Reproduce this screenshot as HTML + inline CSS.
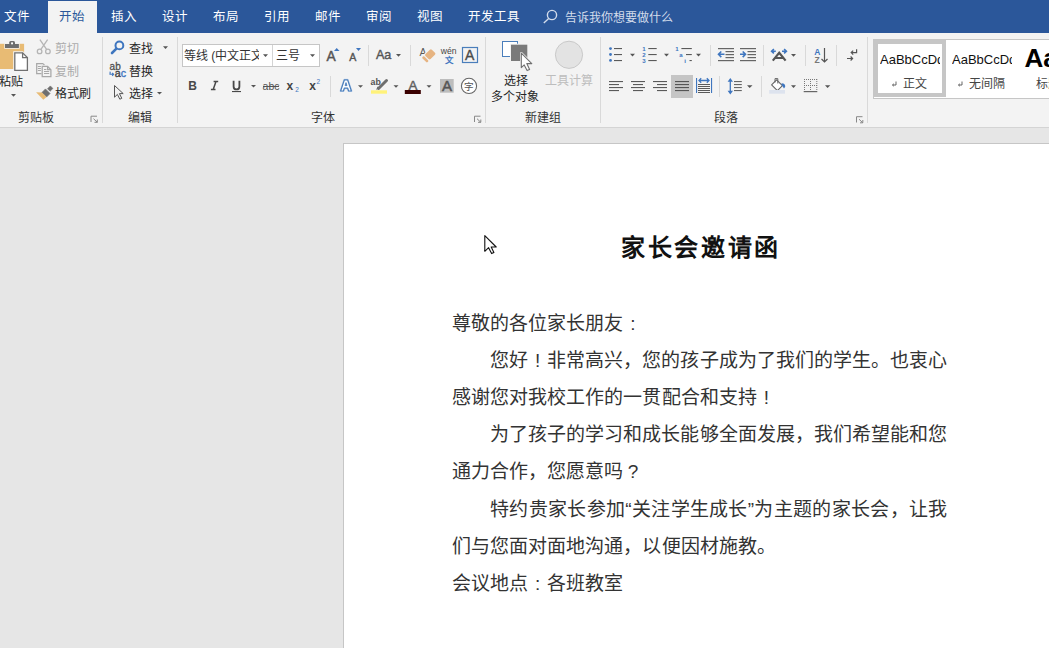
<!DOCTYPE html>
<html lang="zh-CN"><head><meta charset="utf-8">
<style>
*{margin:0;padding:0;box-sizing:border-box}
html,body{width:1049px;height:648px;overflow:hidden;background:#e6e6e6;font-family:"Liberation Sans",sans-serif;}
#tabbar{position:absolute;left:0;top:0;width:1049px;height:33px;background:#2b579a}
.tab{position:absolute;top:9px;color:#fff;font-size:12.5px;line-height:16px;white-space:nowrap}
#active{position:absolute;left:48px;top:1px;width:49px;height:33px;background:#f3f3f3}
#ribbon{position:absolute;left:0;top:33px;width:1049px;height:95px;background:#f3f3f3;border-bottom:1px solid #d4d4d4}
.t{position:absolute;font-size:12px;line-height:14px;color:#262626;white-space:nowrap}
.g{color:#ababab}
.lbl{position:absolute;top:110.5px;font-size:12px;line-height:14px;color:#333;white-space:nowrap}
#page{position:absolute;left:343px;top:143px;width:720px;height:520px;background:#fff;border-left:1px solid #c6c6c6;border-top:1px solid #c6c6c6}
.p{position:absolute;font-size:19px;line-height:20px;color:#333;white-space:nowrap;font-weight:300;letter-spacing:0.05px}
svg{position:absolute;left:0;top:0}
.q{display:inline-block;width:19px;overflow:visible}
.c{display:inline-block;width:19px;text-align:center;font-weight:normal}
</style></head><body>
<div id="tabbar"></div>
<div id="ribbon"></div>
<div id="active"></div>
<div class="tab" style="left:4px">文件</div>
<div class="tab" style="left:59px;color:#2b579a">开始</div>
<div class="tab" style="left:111px">插入</div>
<div class="tab" style="left:162px">设计</div>
<div class="tab" style="left:213px">布局</div>
<div class="tab" style="left:264px">引用</div>
<div class="tab" style="left:315px">邮件</div>
<div class="tab" style="left:366px">审阅</div>
<div class="tab" style="left:417px">视图</div>
<div class="tab" style="left:468px">开发工具</div>
<div class="tab" style="left:565px;top:9.5px;font-size:12px;color:#d3dceb">告诉我你想要做什么</div>

<div class="lbl" style="left:18px">剪贴板</div>
<div class="lbl" style="left:128px">编辑</div>
<div class="lbl" style="left:311px">字体</div>
<div class="lbl" style="left:525px">新建组</div>
<div class="lbl" style="left:714px">段落</div>

<div class="t" style="left:-1px;top:75px">粘贴</div>
<div class="t g" style="left:55px;top:42px">剪切</div>
<div class="t g" style="left:55px;top:65px">复制</div>
<div class="t" style="left:55px;top:87px">格式刷</div>
<div class="t" style="left:129px;top:42px">查找</div>
<div class="t" style="left:129px;top:65px">替换</div>
<div class="t" style="left:129px;top:87px">选择</div>

<div style="position:absolute;left:182px;top:44px;width:138px;height:23px;background:#fff;border:1px solid #c6c6c6"></div>
<div style="position:absolute;left:272px;top:45px;width:1px;height:21px;background:#d4d4d4"></div>
<div class="t" style="left:184px;top:49px;width:75px;overflow:hidden;color:#333">等线 (中文正文)</div>
<div class="t" style="left:276px;top:49px;color:#333">三号</div>
<div class="t" style="left:504px;top:74px">选择</div>
<div class="t" style="left:492px;top:90px;left:491px">多个对象</div>
<div class="t g" style="left:545px;top:74px;color:#bdbdbd">工具计算</div>
<!--NEWGROUP-->
<div style="position:absolute;left:873px;top:39px;width:200px;height:60px;background:#fff;border:1px solid #c6c6c6"></div>
<div style="position:absolute;left:874px;top:40px;width:72px;height:57px;border:4px solid #c6c6c6;background:#fff"></div>
<div class="t" style="left:880px;top:52px;width:60px;overflow:hidden;font-size:13px;line-height:15px;color:#111">AaBbCcDd</div>
<div class="t" style="left:952px;top:52px;width:60px;overflow:hidden;font-size:13px;line-height:15px;color:#111">AaBbCcDd</div>
<div class="t" style="left:1024.5px;top:44px;font-size:26px;line-height:28px;color:#000;font-weight:bold">Aa</div>
<div class="t" style="left:903px;top:77px;color:#444">正文</div>
<div class="t" style="left:969px;top:77px;color:#444">无间隔</div>
<div class="t" style="left:1036px;top:77px;color:#444">标题</div>
<svg width="1049" height="130" viewBox="0 0 1049 130" style="font-family:'Liberation Sans',sans-serif">
<g fill="#d9d9d9">
<rect x="102" y="37" width="1" height="86"/><rect x="177" y="37" width="1" height="86"/>
<rect x="485" y="37" width="1" height="86"/><rect x="600" y="37" width="1" height="86"/>
<rect x="867" y="37" width="1" height="86"/>
<rect x="368" y="45" width="1" height="21"/><rect x="410" y="45" width="1" height="21"/>
<rect x="330" y="76" width="1" height="21"/>
<rect x="710" y="45" width="1" height="21"/><rect x="763" y="45" width="1" height="21"/>
<rect x="805" y="45" width="1" height="21"/><rect x="836" y="45" width="1" height="21"/>
<rect x="719" y="76" width="1" height="21"/><rect x="761" y="76" width="1" height="21"/>
</g>
<!-- search in tab bar -->
<g stroke="#d3dceb" stroke-width="1.4" fill="none"><circle cx="552" cy="15" r="4.6"/><path d="M548.7 18.4 L543.8 23"/></g>
<!-- paste -->
<rect x="-3" y="43.8" width="27.1" height="25.2" fill="#e8bb74"/>
<path d="M4.3 43.3 H8.5 Q8.5 40.4 11 40.4 H13.2 Q15.7 40.4 15.7 43.3 H19.6 V48.7 H4.3 Z" fill="#f3f3f3"/>
<rect x="5" y="44" width="13.9" height="4" fill="#6e6e6e"/>
<path d="M9.2 44.2 V42.6 Q9.2 41.1 10.7 41.1 H13.5 Q15 41.1 15 42.6 V44.2 Z" fill="#6e6e6e"/>
<rect x="11.1" y="42.4" width="1.9" height="1.9" fill="#fff"/>
<path d="M13.2 51.2 H23 L28.8 57 V71.8 H13.2 Z" fill="#f3f3f3"/>
<path d="M14.8 52.8 H22.6 L27.4 57.6 V70.3 H14.8 Z" fill="#fff" stroke="#707070" stroke-width="1.3" stroke-linejoin="miter"/>
<path d="M22.6 52.8 V57.6 H27.4" fill="none" stroke="#707070" stroke-width="1.3"/>
<path d="M11 94 H16 L13.5 96.8 Z" fill="#555"/>
<!-- scissors -->
<g stroke="#b5b5b5" stroke-width="1.3" fill="none">
<circle cx="39.6" cy="51.4" r="2.3"/><circle cx="47.9" cy="51.4" r="2.3"/>
<path d="M40.9 49.3 L47.6 39.6 M46.6 49.3 L39.9 39.6"/></g>
<!-- copy -->
<g stroke="#a8a8a8" fill="none" stroke-width="1.25">
<path d="M43 63.6 H36.7 V73.6 H41.5 M43 63.6 L44.4 65"/>
<path d="M37.9 66.5 H40.9 M37.9 68.5 H40.9 M37.9 70.5 H40.9" stroke-width="1"/>
<path d="M42.2 66.4 H47.6 L50.9 69.7 V76.6 H42.2 Z" stroke-linejoin="miter"/>
<path d="M47.6 66.4 V69.7 H50.9"/>
<path d="M44 69.5 H46.4 M44 71.5 H49.2 M44 73.5 H49.2" stroke-width="1"/></g>
<!-- format painter -->
<path d="M50.06 91.28 L47.52 88.74 L50.34 85.92 L52.88 88.46 Z" fill="#6e6e6e" stroke="#6e6e6e" stroke-width="0.6" stroke-linejoin="round"/>
<path d="M46.56 97.1 L41.9 92.44 L45.44 88.9 L50.1 93.56 Z" fill="#6e6e6e" stroke="#6e6e6e" stroke-width="0.6" stroke-linejoin="round"/>
<path d="M41.9 92.44 L46.56 97.1 L43.3 99.7 L36.1 92.3 Z" fill="#e8bb74"/>
<!-- find -->
<circle cx="119.4" cy="45.4" r="3.9" stroke="#3f76bf" stroke-width="2" fill="none"/>
<path d="M116.4 48.6 L112 53" stroke="#3f76bf" stroke-width="2.6" stroke-linecap="round"/>
<path d="M163 46.3 H168 L165.5 49 Z" fill="#555"/>
<!-- replace -->
<text x="109.6" y="69.7" font-size="10" fill="#505050" stroke="#505050" stroke-width="0.3">ab</text>
<text x="114.8" y="76.8" font-size="10.6" fill="#404040" stroke-width="0.35" stroke="#404040">a<tspan fill="#3f76bf" stroke="#3f76bf">c</tspan></text>
<path d="M110.2 71.6 L110 74.3 H113.6 M112.2 72.8 L113.6 74.3 L112.2 75.8" stroke="#3f76bf" stroke-width="1.1" fill="none"/>
<!-- select -->
<path d="M114.5 85.5 V97.2 L117.4 94.4 L119.8 99.2 L121.8 98.3 L119.4 93.6 H123.2 Z" stroke="#555" stroke-width="1" fill="#f3f3f3" stroke-linejoin="round"/>
<path d="M157 92 H162 L159.5 94.6 Z" fill="#555"/>
<!-- launchers -->
<g stroke="#888" stroke-width="1" fill="none">
<path d="M91 122 V116.2 H97"/><path d="M93.5 118.7 L97.3 122.3 M97.3 119.5 V122.3 H94.5"/>
<path d="M474.5 122 V116.2 H480.5"/><path d="M477 118.7 L480.8 122.3 M480.8 119.5 V122.3 H478"/>
<path d="M856.5 122.5 V116.7 H862.5"/><path d="M859 119.2 L862.8 122.8 M862.8 120 V122.8 H860"/>
</g>
<!-- font dropdown arrows -->
<g fill="#555">
<path d="M263 54.3 H268 L265.5 57 Z"/><path d="M310 54.3 H315 L312.5 57 Z"/>
<path d="M396 54 H401 L398.5 56.7 Z"/>
<path d="M251 85 H256 L253.5 87.6 Z"/>
<path d="M358 85.2 H363 L360.5 87.8 Z"/><path d="M393.5 85.2 H398.5 L396 87.8 Z"/>
<path d="M426.5 85.2 H431.5 L429 87.8 Z"/>
<path d="M630 53.8 H635 L632.5 56.5 Z"/><path d="M664 53.8 H669 L666.5 56.5 Z"/>
<path d="M696 53.8 H701 L698.5 56.5 Z"/><path d="M791 54 H796 L793.5 56.7 Z"/>
<path d="M747 85.2 H752.5 L749.7 87.9 Z"/><path d="M791 85.2 H796 L793.5 87.9 Z"/>
<path d="M825 85.2 H830.3 L827.6 87.9 Z"/>
</g>
<!-- grow/shrink -->
<text x="326.4" y="60.8" font-size="13.8" fill="#555" stroke="#555" stroke-width="0.45">A</text>
<path d="M334 51 H339.5 L336.7 48 Z" fill="#3f76bf"/>
<text x="349.2" y="60.8" font-size="10.6" fill="#555" stroke="#555" stroke-width="0.4">A</text>
<path d="M356 48 H361 L358.5 51 Z" fill="#3f76bf"/>
<text x="375.9" y="59.2" font-size="12.6" fill="#555" stroke="#555" stroke-width="0.4">Aa</text>
<!-- clear formatting -->
<text x="419.5" y="56" font-size="10.5" fill="#5a5a5a">A</text>
<g transform="translate(429.6 55) rotate(-45)">
<rect x="-4.6" y="-4.6" width="10.2" height="9.2" rx="1.6" fill="#f3f3f3"/>
<rect x="-3.6" y="-3.6" width="9" height="7.2" rx="1.4" fill="#e6b482"/>
<rect x="-7.4" y="-3.6" width="2.6" height="7.2" rx="1" fill="#e6b482"/>
</g>
<!-- phonetic -->
<text x="440.8" y="54.3" font-size="8.6" fill="#444">wén</text>
<text x="444.5" y="62.6" font-size="8.5" fill="#3f76bf" font-weight="bold">文</text>
<!-- char border -->
<rect x="462.5" y="47.5" width="15" height="15" stroke="#4a7ebb" stroke-width="1.2" fill="none"/>
<text x="465" y="59.9" font-size="14" fill="#4a4a4a" stroke="#4a4a4a" stroke-width="0.35">A</text>
<!-- B I U abc x2 x2 -->
<text x="188.2" y="90" font-size="12" font-weight="bold" fill="#484848">B</text>
<path d="M213.6 81.6 H218.2 M210.9 89.4 H215.5 M216 81.6 L213.2 89.4" stroke="#484848" stroke-width="1.5" fill="none"/>
<path d="M233.6 80.8 V86.4 Q233.6 89.4 236.5 89.4 Q239.4 89.4 239.4 86.4 V80.8" stroke="#484848" stroke-width="1.8" fill="none"/>
<rect x="232" y="91" width="9" height="1.1" fill="#484848"/>
<text x="262.6" y="90" font-size="10.5" fill="#555">abc</text>
<rect x="263" y="86" width="16" height="1" fill="#555"/>
<text x="286.6" y="90" font-size="12" font-weight="bold" fill="#444">x</text>
<text x="295.3" y="92.2" font-size="6.5" fill="#3f76bf">2</text>
<text x="309.2" y="90" font-size="12" font-weight="bold" fill="#444">x</text>
<text x="316.6" y="84.4" font-size="6.5" fill="#3f76bf">2</text>
<!-- text effects -->
<path d="M340.6 91 L344.4 79.8 H347.6 L351.4 91 H348.6 L347.7 88.2 H344.3 L343.4 91 Z M345 85.8 L346 82.4 L347 85.8 Z" fill="#fff" stroke="#c5d6ec" stroke-width="2.2" stroke-linejoin="round"/>
<path d="M340.6 91 L344.4 79.8 H347.6 L351.4 91 H348.6 L347.7 88.2 H344.3 L343.4 91 Z" fill="#fff" stroke="#4a7ebb" stroke-width="1.2" stroke-linejoin="round"/>
<path d="M345 85.6 L346 82.6 L347 85.6 Z" fill="#4a7ebb" stroke="#4a7ebb" stroke-width="0.8"/>
<!-- highlight -->
<text x="370.6" y="84.5" font-size="8.8" fill="#555" font-weight="bold">ab</text>
<path d="M386.5 80.5 L378.5 88.5" stroke="#6e6e6e" stroke-width="3" stroke-linecap="round"/>
<path d="M379.2 87.8 L376 90 L377.6 86.6 Z" fill="#6e6e6e"/>
<rect x="371" y="90.3" width="16" height="3.4" fill="#fff27a"/>
<!-- font color -->
<text x="408.6" y="89.7" font-size="13.3" fill="#606060" stroke="#606060" stroke-width="0.45">A</text>
<rect x="404.8" y="90" width="16" height="4" fill="#3a0000"/>
<!-- char shading -->
<rect x="440" y="79" width="13.7" height="13.7" fill="#bdbdbd"/>
<text x="441.9" y="90.8" font-size="15" fill="#555" stroke="#555" stroke-width="0.5">A</text>
<!-- enclosed -->
<circle cx="469" cy="85.9" r="7.6" stroke="#666" fill="#fff" stroke-width="1.1"/>
<text x="464" y="90.3" font-size="9.6" fill="#555">字</text>
<!-- select objects -->
<rect x="502.5" y="41.5" width="15" height="15" fill="#fff" stroke="#4a7ebb"/>
<rect x="510" y="43.7" width="18.3" height="18.3" fill="#f3f3f3"/><rect x="511" y="44.7" width="16.3" height="16.3" fill="#7a7a7a"/>
<path d="M521.3 53.2 V67.6 L524.2 64.9 L527.1 70.6 L529.6 69.4 L526.8 63.6 H531.8 Z" fill="#fff" stroke="#f3f3f3" stroke-width="2.4" stroke-linejoin="round"/><path d="M521.3 53.2 V67.6 L524.2 64.9 L527.1 70.6 L529.6 69.4 L526.8 63.6 H531.8 Z" fill="#fff" stroke="#707070" stroke-width="1.1" stroke-linejoin="round"/>
<circle cx="569" cy="54.8" r="13.6" fill="#e3e3e3" stroke="#c9c9c9"/>
<!-- bullets -->
<g fill="#3f76bf"><circle cx="610.5" cy="48.6" r="1.4"/><circle cx="610.5" cy="54.5" r="1.4"/><circle cx="610.5" cy="60.4" r="1.4"/></g>
<g fill="#5a5a5a">
<rect x="614" y="48" width="8" height="1.1"/><rect x="614" y="54" width="8" height="1.1"/><rect x="614" y="60" width="8" height="1.1"/>
<rect x="648.3" y="48" width="8.4" height="1.1"/><rect x="648.3" y="54" width="8.4" height="1.1"/><rect x="648.3" y="60" width="8.4" height="1.1"/>
<rect x="681.4" y="48" width="10.4" height="1.1"/><rect x="686" y="54" width="5.8" height="1.1"/><rect x="689.5" y="60" width="2.3" height="1.1"/>
</g>
<g fill="#3f76bf" font-size="6.1" font-weight="bold">
<text x="642.3" y="50.6">1</text><text x="642.3" y="56.8">2</text><text x="642.3" y="62.9">3</text>
<text x="675.3" y="50.6">1</text><text x="679.2" y="56.8">a</text><text x="684.2" y="62.9">i</text>
</g>
<!-- indent -->
<g fill="#666">
<rect x="718" y="48" width="16" height="1.2"/><rect x="725.5" y="51" width="8.5" height="1.2"/><rect x="725.5" y="54" width="8.5" height="1.2"/><rect x="725.5" y="57" width="8.5" height="1.2"/><rect x="718" y="60" width="16" height="1.2"/>
<rect x="740" y="48" width="16" height="1.2"/><rect x="747.5" y="51" width="8.5" height="1.2"/><rect x="747.5" y="54" width="8.5" height="1.2"/><rect x="747.5" y="57" width="8.5" height="1.2"/><rect x="740" y="60" width="16" height="1.2"/>
</g>
<g stroke="#3f76bf" stroke-width="1.6" fill="none">
<path d="M719 54.3 H724.5 M721.3 51.5 L718.5 54.3 L721.3 57.1"/>
<path d="M740 54.3 H745.5 M742.7 51.5 L745.5 54.3 L742.7 57.1"/>
</g>
<!-- chinese layout -->
<path d="M772.8 60.6 L779.2 52.8 L785.6 60.6 M775.4 58 H783" stroke="#555" stroke-width="2.2" fill="none"/>
<g stroke="#3f76bf" stroke-width="1.6" fill="none"><path d="M771.6 51.2 H775.8 M773.9 49 L771.6 51.2 L773.9 53.4"/><path d="M782 51.2 H786.4 M784.1 49 L786.4 51.2 L784.1 53.4"/></g>
<!-- sort -->
<text x="814.2" y="54.6" font-size="8.5" fill="#3f76bf" font-weight="bold">A</text>
<text x="814.6" y="62.6" font-size="8.5" fill="#777" font-weight="bold">Z</text>
<path d="M824.5 48 V62 M821.5 59 L824.5 62 L827.5 59" stroke="#555" stroke-width="1.2" fill="none"/>
<!-- show marks -->
<g stroke="#555" stroke-width="1.2" fill="none">
<path d="M856.6 49.2 V52.6 H851.2 M853.2 50.6 L851.2 52.6 L853.2 54.6"/>
<path d="M847 58.5 H852.6 M850.6 56.5 L852.6 58.5 L850.6 60.5"/>
</g>
<!-- align -->
<g fill="#5a5a5a">
<rect x="609" y="81" width="14" height="1.1"/><rect x="609" y="84" width="10" height="1.1"/><rect x="609" y="87" width="14" height="1.1"/><rect x="609" y="90" width="10" height="1.1"/>
<rect x="631" y="81" width="14" height="1.1"/><rect x="633" y="84" width="10" height="1.1"/><rect x="631" y="87" width="14" height="1.1"/><rect x="633" y="90" width="10" height="1.1"/>
<rect x="653" y="81" width="14" height="1.1"/><rect x="657" y="84" width="10" height="1.1"/><rect x="653" y="87" width="14" height="1.1"/><rect x="657" y="90" width="10" height="1.1"/>
</g>
<rect x="671" y="75" width="22" height="23" fill="#c5c5c5"/>
<g fill="#555"><rect x="675" y="81" width="14" height="1.1"/><rect x="675" y="84" width="14" height="1.1"/><rect x="675" y="87" width="14" height="1.1"/><rect x="675" y="90" width="14" height="1.1"/></g>
<!-- distributed -->
<g fill="#3f76bf"><rect x="696" y="78" width="1.1" height="15"/><rect x="711" y="78" width="1.1" height="15"/></g>
<path d="M699 80.5 H709 M701.2 78.3 L699 80.5 L701.2 82.7 M706.8 78.3 L709 80.5 L706.8 82.7" stroke="#3f76bf" stroke-width="1.3" fill="none"/>
<g fill="#5a5a5a"><rect x="698" y="84" width="12" height="1"/><rect x="698" y="86" width="12" height="1"/><rect x="698" y="88" width="12" height="1"/><rect x="698" y="90" width="12" height="1"/><rect x="698" y="92" width="12" height="1"/></g>
<!-- line spacing -->
<path d="M730.3 80.5 V92" stroke="#3f76bf" stroke-width="1.3"/>
<path d="M727.6 81.8 L730.3 78 L733 81.8 Z M727.6 90.7 L730.3 94.4 L733 90.7 Z" fill="#3f76bf"/>
<g fill="#666"><rect x="734" y="81" width="7.8" height="1.1"/><rect x="734" y="84" width="7.8" height="1.1"/><rect x="734" y="87" width="7.8" height="1.1"/><rect x="734" y="90" width="7.8" height="1.1"/></g>
<!-- para shading -->
<path d="M771.6 84.8 L776.6 79.8 L782.4 85.6 L777.4 90.6 Z" fill="#fff" stroke="#666" stroke-width="1.1" stroke-linejoin="round"/>
<path d="M775 82.5 V78.6 H777.8 V83.5" stroke="#666" stroke-width="1" fill="none"/>
<path d="M781.6 83.2 Q785.6 83.6 785.2 86.8 L784 88.6 Q782.6 86 781.6 85 Z" fill="#3f76bf"/>
<rect x="769.2" y="90" width="15.8" height="3.7" fill="#dde3ee"/>
<!-- borders -->
<g stroke="#777" stroke-width="1" stroke-dasharray="1 1" fill="none">
<path d="M804 79.5 H817 M804 85.5 H817 M804.5 79 V91 M810.5 79 V91 M816.8 79 V91"/>
</g>
<rect x="803.7" y="91" width="13.6" height="1.2" fill="#666"/>
<!-- style arrows -->
<g stroke="#555" stroke-width="0.9" fill="none">
<path d="M896 81.5 V85 H892.5 M893.8 83.8 L892.5 85 L893.8 86.2"/>
<path d="M962 81.5 V85 H958.5 M959.8 83.8 L958.5 85 L959.8 86.2"/>
</g>
</svg>


<div id="page"></div>
<div class="p" style="left:621px;top:235px;font-size:24px;line-height:26px;font-weight:bold;letter-spacing:2.7px;color:#111">家长会邀请函</div>
<div class="p" style="left:452px;top:314px">尊敬的各位家长朋友<span class="c">:</span></div>
<div class="p" style="left:490px;top:351px">您好<span class="c">!</span>非常高兴，您的孩子成为了我们的学生。也衷心</div>
<div class="p" style="left:452px;top:388px">感谢您对我校工作的一贯配合和支持<span class="c">!</span></div>
<div class="p" style="left:490px;top:425px">为了孩子的学习和成长能够全面发展，我们希望能和您</div>
<div class="p" style="left:452px;top:462px">通力合作，您愿意吗<span class="c">?</span></div>
<div class="p" style="left:490px;top:500px;letter-spacing:0.32px">特约贵家长参加“关注学生成长”为主题的家长会，让我</div>
<div class="p" style="left:452px;top:537px">们与您面对面地沟通，以便因材施教。</div>
<div class="p" style="left:452px;top:574px">会议地点<span class="c">:</span>各班教室</div>
<svg width="1049" height="648" style="position:absolute;left:0;top:0"><path d="M484.8 235.6 V251.3 L488.6 247.7 L491.6 253.6 L493.9 252.4 L491.2 247 H496.2 Z" fill="#fff" stroke="#111" stroke-width="1.1" stroke-linejoin="round"/></svg>
</body></html>
